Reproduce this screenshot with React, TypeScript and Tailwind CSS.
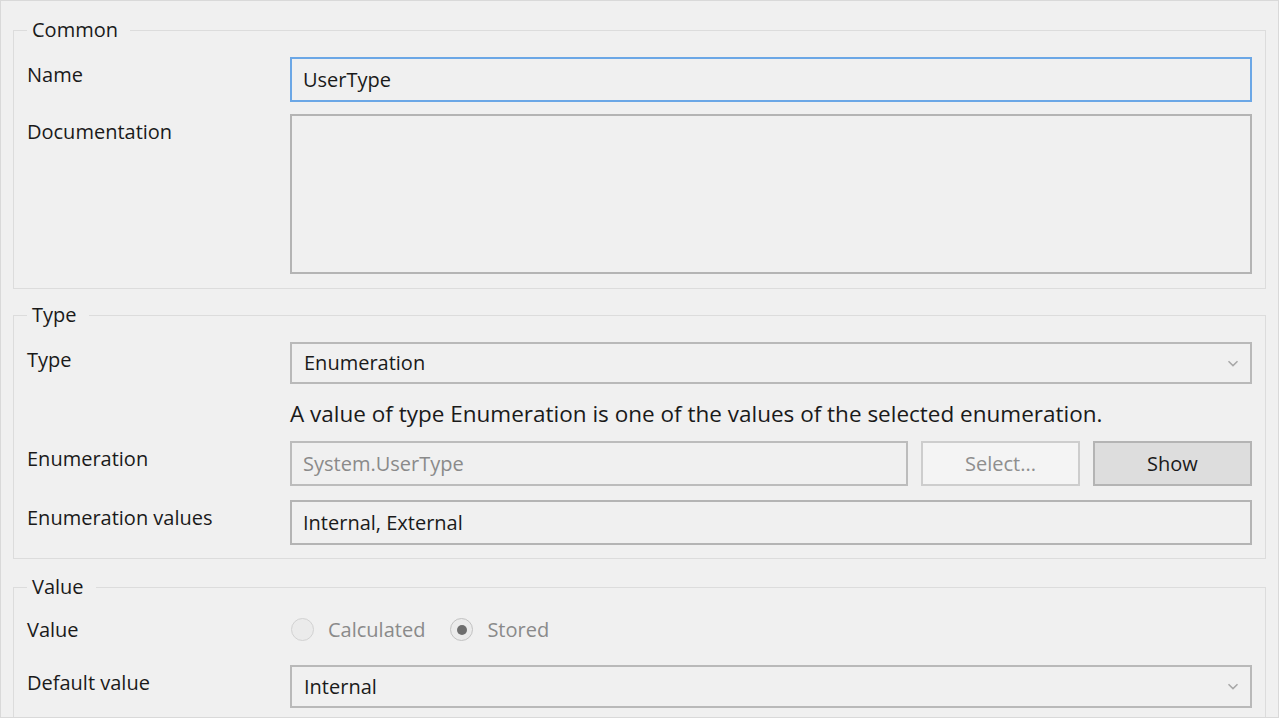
import React from 'react';

const font = { fontFamily: '"Open Sans", "Noto Sans", sans-serif' };

const Chevron = () => (
  <svg width="12" height="7" viewBox="0 0 12 7" className="text-[#a8a8a8]">
    <path d="M1.5 1.2 L6 5.6 L10.5 1.2" fill="none" stroke="currentColor" strokeWidth="1.5" />
  </svg>
);

const Row = ({ label, children, className = '' }: { label: string; children: React.ReactNode; className?: string }) => (
  <div className={`flex items-start ${className}`}>
    <div className="w-[263px] shrink-0 pt-[4px] leading-[27px]">{label}</div>
    <div className="flex-1">{children}</div>
  </div>
);

const Group = ({ title, children, className = '' }: { title: string; children: React.ReactNode; className?: string }) => (
  <fieldset className={`border border-[#dcdcdc] mx-[12px] pl-[13px] pr-[13px] ${className}`}>
    <legend className="pl-[5px] pr-[12px] leading-[26px]">{title}</legend>
    {children}
  </fieldset>
);

const Combo = ({ value, tall }: { value: string; tall?: boolean }) => (
  <div className={`${tall ? 'h-[43px]' : 'h-[42px]'} border-2 border-[#b9b9b9] bg-[#f0f0f0] flex items-center justify-between pl-[12px] pr-[11px]`}>
    <span>{value}</span>
    <Chevron />
  </div>
);

const Radio = ({ checked, label }: { checked?: boolean; label: string }) => (
  <div className="flex items-center gap-[14px]">
    <span className={`w-[23px] h-[23px] rounded-full border-[1.5px] bg-[#ebebeb] flex items-center justify-center ${checked ? 'border-[#c2c2c2]' : 'border-[#d2d2d2]'}`}>
      {checked && <span className="w-[10px] h-[10px] rounded-full bg-[#6e6e6e]" />}
    </span>
    <span>{label}</span>
  </div>
);

export default function App() {
  return (
    <div style={font} className="w-[1279px] h-[718px] overflow-hidden bg-[#f0f0f0] border border-[#d9d9d9] text-[20px] text-[#1a1a1a] pt-[16px]">
      {/* Common */}
      <Group title="Common" className="pb-[14px]">
        <Row label="Name" className="mt-[14px]">
          <div className="h-[45px] border-2 border-[#6ba7e6] bg-[#f0f0f0] flex items-center pl-[11px]">UserType</div>
        </Row>
        <Row label="Documentation" className="mt-[12px]">
          <div className="h-[160px] border-2 border-[#b4b4b4] bg-[#f0f0f0]" />
        </Row>
      </Group>

      {/* Type */}
      <Group title="Type" className="mt-[13px] pb-[13px]">
        <Row label="Type" className="mt-[14px]">
          <Combo value="Enumeration" />
        </Row>
        <Row label="" className="mt-[14px]">
          <div className="leading-[31px] text-[22.5px]">A value of type Enumeration is one of the values of the selected enumeration.</div>
        </Row>
        <Row label="Enumeration" className="mt-[12px]">
          <div className="flex gap-[13px]">
            <div className="flex-1 h-[45px] border-2 border-[#bcbcbc] bg-[#f0f0f0] flex items-center pl-[11px] text-[#8a8a8a]">System.UserType</div>
            <button className="w-[159px] h-[45px] border-2 border-[#cdcdcd] bg-[#f4f4f4] text-[#8e8e8e]">Select...</button>
            <button className="w-[159px] h-[45px] border-2 border-[#b4b4b4] bg-[#dddddd] text-[#1a1a1a]">Show</button>
          </div>
        </Row>
        <Row label="Enumeration values" className="mt-[14px]">
          <div className="h-[45px] border-2 border-[#b4b4b4] bg-[#f0f0f0] flex items-center pl-[11px]">Internal, External</div>
        </Row>
      </Group>

      {/* Value */}
      <Group title="Value" className="mt-[15px] pb-[10px]">
        <Row label="Value" className="mt-[12px]">
          <div className="flex items-center gap-[25px] h-[35px] text-[#8a8a8a] pl-[1px]">
            <Radio label="Calculated" />
            <Radio label="Stored" checked />
          </div>
        </Row>
        <Row label="Default value" className="mt-[18px]">
          <Combo value="Internal" tall />
        </Row>
      </Group>
    </div>
  );
}
